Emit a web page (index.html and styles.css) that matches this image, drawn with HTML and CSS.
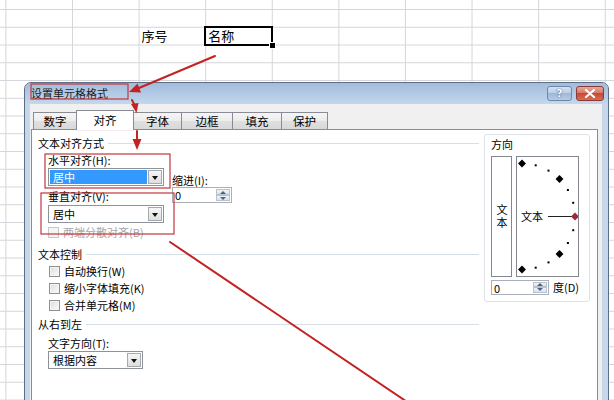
FILE: index.html
```html
<!DOCTYPE html>
<html lang="zh-CN">
<head>
<meta charset="utf-8">
<title>设置单元格格式</title>
<link rel="stylesheet" href="styles.css">
</head>
<body>
<div class="sheet">
  <div class="cells">
    <div class="cell c-seq">序号</div>
    <div class="cell c-name selected">名称</div>
  </div>
</div>

<div class="dialog">
  <div class="titlebar">
    <span class="title">设置单元格格式</span>
    <div class="tb-buttons">
      <span class="tb-btn help">?</span>
      <span class="tb-btn close"><svg width="12" height="9" viewBox="0 0 12 9"><path d="M2 1 L10 8 M10 1 L2 8" stroke="#fff" stroke-width="2.2" stroke-linecap="round"/></svg></span>
    </div>
  </div>
  <div class="client">
    <div class="tabs">
      <div class="tab t-num">数字</div>
      <div class="tab t-align active">对齐</div>
      <div class="tab t-font">字体</div>
      <div class="tab t-border">边框</div>
      <div class="tab t-fill">填充</div>
      <div class="tab t-prot">保护</div>
    </div>
    <div class="panel">
      <div class="left">
        <div class="group-h"><span>文本对齐方式</span></div>
        <div class="align">
          <div class="align-main">
            <div class="lbl">水平对齐(H):</div>
            <div class="combo c-wide selected-val"><span class="val">居中</span><span class="dd"></span></div>
            <div class="lbl lbl-gap">垂直对齐(V):</div>
            <div class="combo c-wide c-v"><span class="val">居中</span><span class="dd"></span></div>
            <div class="chk disabled"><span class="box"></span><span>两端分散对齐(B)</span></div>
          </div>
          <div class="indent">
            <div class="lbl">缩进(I):</div>
            <div class="spin s-indent"><span class="val">0</span><span class="spin-btns"><span class="up"></span><span class="down"></span></span></div>
          </div>
        </div>

        <div class="group-h g2"><span>文本控制</span></div>
        <div class="checks">
          <div class="chk"><span class="box"></span><span>自动换行(W)</span></div>
          <div class="chk"><span class="box"></span><span>缩小字体填充(K)</span></div>
          <div class="chk"><span class="box"></span><span>合并单元格(M)</span></div>
        </div>

        <div class="group-h g3"><span>从右到左</span></div>
        <div class="rtl">
          <div class="lbl">文字方向(T):</div>
          <div class="combo c-dir"><span class="val">根据内容</span><span class="dd"></span></div>
        </div>
      </div>

      <div class="orient">
        <div class="orient-h">方向</div>
        <div class="orient-boxes">
          <div class="vtext"><span class="vt">文本</span></div>
          <div class="dial">
            <svg width="61" height="119" viewBox="0 0 61 119">
              <g fill="#000">
                <rect x="2.2" y="3.7" width="5.6" height="5.6" transform="rotate(45 5 6.5)"/>
                <rect x="17.7" y="7.3" width="2" height="2"/>
                <rect x="30.5" y="12.6" width="2" height="2"/>
                <rect x="39.7" y="19.2" width="5.6" height="5.6" transform="rotate(45 42.5 22)"/>
                <rect x="49.9" y="32" width="2" height="2"/>
                <rect x="55.2" y="44.8" width="2" height="2"/>
                <rect x="55.2" y="72.2" width="2" height="2"/>
                <rect x="49.9" y="85" width="2" height="2"/>
                <rect x="39.7" y="94.2" width="5.6" height="5.6" transform="rotate(45 42.5 97)"/>
                <rect x="30.5" y="104.4" width="2" height="2"/>
                <rect x="17.7" y="109.7" width="2" height="2"/>
                <rect x="2.2" y="109.7" width="5.6" height="5.6" transform="rotate(45 5 112.5)"/>
              </g>
              <text x="4" y="63.5" font-size="11" font-family="Noto Sans CJK SC, sans-serif" fill="#000">文本</text>
              <line x1="31" y1="59.5" x2="55" y2="59.5" stroke="#222" stroke-width="1"/>
              <rect x="55.2" y="56.7" width="5.6" height="5.6" fill="#a0283a" transform="rotate(45 58 59.5)"/>
            </svg>
          </div>
        </div>
        <div class="deg-row">
          <div class="spin s-deg"><span class="val">0</span><span class="spin-btns"><span class="up"></span><span class="down"></span></span></div>
          <span class="deg-lbl">度(D)</span>
        </div>
      </div>
    </div>
  </div>
</div>

<svg class="annot" width="614" height="400" viewBox="0 0 614 400">
  <g fill="none" stroke="#c4343c" stroke-width="1.2">
    <rect x="31" y="84" width="97" height="15"/>
    <rect x="77" y="112.5" width="56" height="17"/>
    <rect x="45" y="154" width="125" height="34"/>
    <rect x="41" y="193" width="133" height="41"/>
  </g>
  <g stroke="#c42222" stroke-width="2" stroke-linecap="round">
    <line x1="215" y1="56" x2="139" y2="88"/>
    <line x1="132" y1="100" x2="134.5" y2="105"/>
    <line x1="137" y1="131" x2="137" y2="139"/>
    <line x1="170" y1="242" x2="425" y2="414"/>
  </g>
  <g fill="#c42222">
    <polygon points="129,92 141,92.5 137.5,83.5"/>
    <polygon points="136.5,113 131,104 138.5,103"/>
    <polygon points="137,150 132.5,139 141.5,139"/>
  </g>
</svg>
</body>
</html>
```

FILE: styles.css
```css
* { box-sizing: border-box; margin: 0; padding: 0; }

html, body { width: 614px; height: 400px; overflow: hidden; }

body {
  position: relative;
  background: #fff;
  font-family: "Noto Sans CJK SC", "Liberation Sans", sans-serif;
  font-size: 11px;
  color: #000;
}

/* ---------- spreadsheet background ---------- */
.sheet {
  height: 400px;
  background-image:
    linear-gradient(to right, #d3d6db 1px, transparent 1px),
    linear-gradient(to bottom, #d3d6db 1px, transparent 1px);
  background-size: 66.6px 100%, 100% 17.75px;
  background-position: 5.4px 0, 0 9px;
}

.cells {
  display: grid;
  grid-template-columns: 5.4px repeat(9, 66.6px);
  grid-template-rows: 17.75px;
  padding-top: 26.75px;
}

.cell {
  position: relative;
  font-size: 13px;
  line-height: 17.75px;
  padding-left: 3px;
}

.c-seq { grid-column: 4; }
.c-name { grid-column: 5; }

.cell.selected {
  outline: 2px solid #000;
  outline-offset: -1px;
}

.cell.selected::after {
  content: "";
  position: absolute;
  right: -4px;
  bottom: -4px;
  width: 5px;
  height: 5px;
  background: #000;
  border: 1px solid #fff;
}

/* ---------- dialog ---------- */
.dialog {
  position: absolute;
  left: 24px;
  top: 82px;
  width: 585px;
  height: 330px;
  border: 1px solid #5d6e84;
  border-radius: 7px 7px 0 0;
  background: #c6d7eb;
  padding: 0 6px 0 5px;
  display: flex;
  flex-direction: column;
}

.titlebar {
  height: 21px;
  margin: 0 -6px 0 -5px;
  padding: 0 4px 0 6px;
  display: flex;
  align-items: flex-start;
  justify-content: space-between;
  background: linear-gradient(#a2bcdc, #b3cbe6 55%, #c4d7ec);
  border-radius: 6px 6px 0 0;
}

.title {
  line-height: 20px;
  color: #1b1b1b;
}

.tb-buttons {
  display: flex;
  gap: 4px;
  margin-top: 3px;
}

.tb-btn {
  height: 15px;
  border-radius: 3px;
  display: flex;
  align-items: center;
  justify-content: center;
}

.help {
  width: 25px;
  border: 1px solid #6f87a6;
  background: linear-gradient(#d4e2f2, #b6cbe4 50%, #9fb8d8 50%, #b5cbe6);
  color: #fff;
  font-family: "DejaVu Sans", sans-serif;
  font-weight: bold;
  font-size: 11px;
  text-shadow: 0 0 1px #34507a, 0 0 1px #34507a;
}

.close {
  width: 28px;
  border: 1px solid #8b3a33;
  background: linear-gradient(#e9a99a, #d6735f 50%, #c74a33 50%, #d2705a);
}

.client {
  flex: 1;
  background: #f0f0f0;
  padding: 0 4px 0 1px;
  display: flex;
  flex-direction: column;
}

/* tabs */
.tabs {
  height: 25px;
  display: flex;
  align-items: flex-end;
  padding-left: 2px;
}

.tab {
  height: 17px;
  border: 1px solid #898c95;
  border-bottom: none;
  margin-right: -1px;
  background: linear-gradient(#f5f5f5, #ececec 50%, #e0e0e0 50%, #d8d8d8);
  display: flex;
  align-items: center;
  justify-content: center;
  font-size: 11.5px;
  line-height: 15px;
}

.tab.active {
  height: 20px;
  margin-bottom: -1px;
  background: #fff;
  position: relative;
  z-index: 1;
}

.t-num { width: 44px; }
.t-align { width: 58px; }
.t-font { width: 49px; }
.t-border { width: 52px; }
.t-fill { width: 50px; }
.t-prot { width: 47px; }

/* panel */
.panel {
  flex: 1;
  border: 1px solid #898c95;
  background: #fff;
  display: flex;
  padding: 7px 0 0 6px;
}

.left {
  width: 441px;
}

.group-h {
  display: flex;
  align-items: center;
  height: 13px;
  line-height: 13px;
}

.group-h::after {
  content: "";
  flex: 1;
  height: 1px;
  margin-left: 4px;
  background: #d5dfe5;
}

.lbl {
  height: 13px;
  line-height: 13px;
}

.align {
  display: flex;
  gap: 8px;
  margin-left: 10px;
  margin-top: 4px;
}

.align-main {
  width: 116px;
}

.combo {
  height: 18px;
  border: 1px solid #8e9399;
  background: #fff;
  display: flex;
  align-items: center;
  padding: 1px;
  margin-top: 1px;
}

.combo .val {
  flex: 1;
  height: 100%;
  line-height: 14px;
  padding-left: 3px;
}

.selected-val .val {
  background: #3399ff;
  color: #fff;
  margin-right: 1px;
}

.combo .dd {
  width: 14px;
  height: 14px;
  border: 1px solid #a6a9ae;
  background: linear-gradient(#f6f6f6, #dedede);
  position: relative;
}

.combo .dd::after {
  content: "";
  position: absolute;
  left: 3px;
  top: 5px;
  border-left: 3.5px solid transparent;
  border-right: 3.5px solid transparent;
  border-top: 4px solid #111;
}

.c-wide { width: 116px; }
.c-v { margin-top: 2px; }
.lbl-gap { margin-top: 4px; }
.c-dir { width: 95px; }

.chk {
  display: flex;
  align-items: center;
  gap: 4px;
  height: 13px;
  line-height: 13px;
  margin-left: 1px;
}

.chk .box {
  width: 11px;
  height: 11px;
  border: 1px solid #8e8f8f;
  background: linear-gradient(135deg, #dcdcdc, #fbfbfb);
  box-shadow: inset 0 0 0 1px #f4f4f4;
}

.align-main .chk {
  margin-top: 3px;
  margin-left: 0;
}

.chk.disabled { color: #a5a5a5; }
.chk.disabled .box { border-color: #c9c9c9; background: #f4f4f4; }

.indent {
  padding-top: 20px;
}

.spin {
  display: flex;
  border: 1px solid #a9b0b8;
  background: #fff;
  padding: 1px;
}

.spin .val {
  flex: 1;
  line-height: 12px;
  padding-left: 1px;
}

.spin-btns {
  width: 14px;
  display: flex;
  flex-direction: column;
}

.spin-btns span {
  flex: 1;
  border: 1px solid #b9c3cf;
  background: linear-gradient(#f1f4f8, #d9e1ea);
  display: flex;
  align-items: center;
  justify-content: center;
}

.spin-btns .up::after {
  content: "";
  border-left: 3px solid transparent;
  border-right: 3px solid transparent;
  border-bottom: 3px solid #4d6185;
}

.spin-btns .down::after {
  content: "";
  border-left: 3px solid transparent;
  border-right: 3px solid transparent;
  border-top: 3px solid #4d6185;
}

.s-indent {
  width: 60px;
  height: 16px;
}

.g2 { margin-top: 9px; }

.checks {
  margin-left: 10px;
  display: flex;
  flex-direction: column;
  gap: 4px;
  margin-top: 4px;
}

.g3 { margin-top: 6px; }

.rtl {
  margin-left: 10px;
  margin-top: 6px;
}

/* orientation */
.orient {
  margin-left: 5px;
  margin-top: -3px;
  width: 106px;
  height: 168px;
  border: 1px solid #dde3e8;
  border-radius: 3px;
  padding: 3px 0 0 6px;
}

.orient-h {
  height: 13px;
  line-height: 13px;
}

.orient-boxes {
  display: flex;
  gap: 4px;
  margin-top: 5px;
}

.vtext {
  width: 21px;
  height: 121px;
  border: 1px solid #828790;
  display: flex;
  align-items: center;
  justify-content: center;
}

.vt {
  writing-mode: vertical-rl;
  text-orientation: upright;
  line-height: 13px;
  letter-spacing: 2px;
}

.dial {
  width: 63px;
  height: 121px;
  border: 1px solid #828790;
}

.dial svg { display: block; }

.deg-row {
  display: flex;
  align-items: center;
  gap: 4px;
  margin-top: 2px;
}

.s-deg {
  width: 58px;
  height: 15px;
}

.annot {
  position: absolute;
  left: 0;
  top: 0;
  pointer-events: none;
}
```
